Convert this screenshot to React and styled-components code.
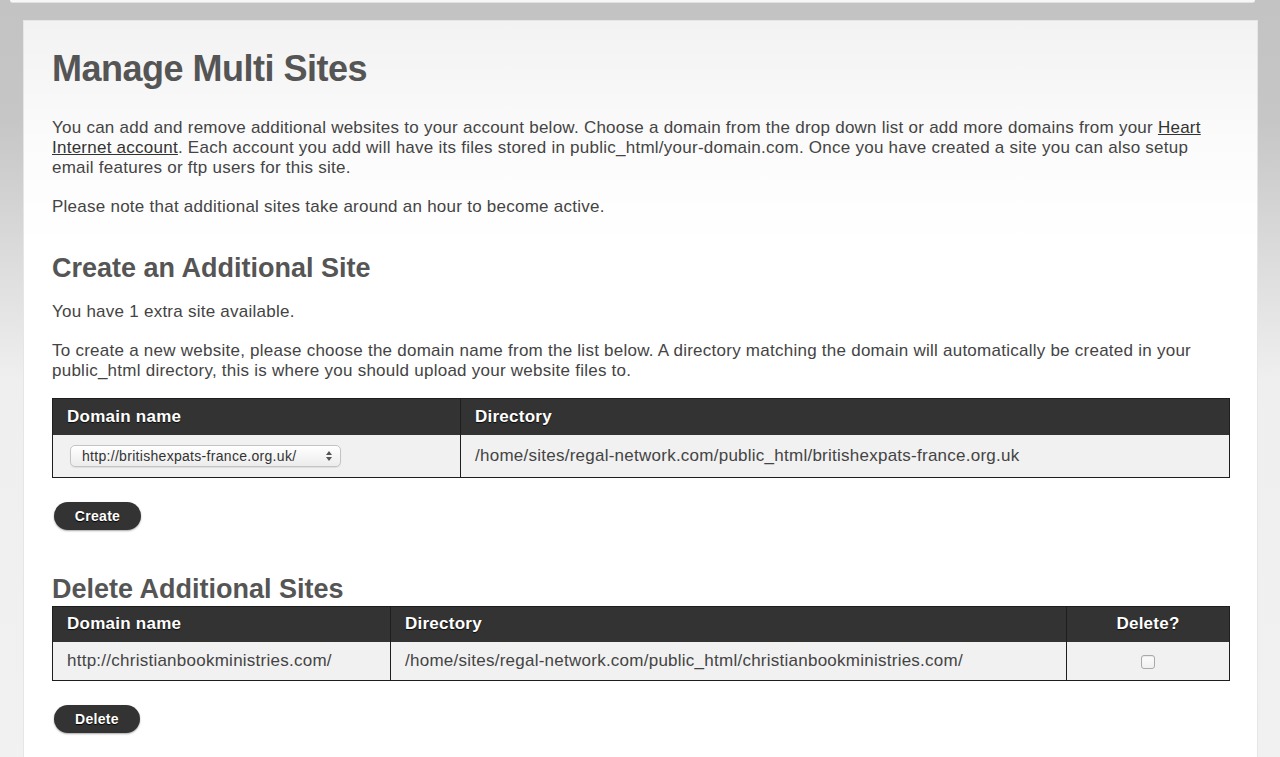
import React from 'react';
import styled, { createGlobalStyle } from 'styled-components';

const GlobalStyle = createGlobalStyle`
  html, body {
    margin: 0;
    padding: 0;
  }
  body {
    font-family: 'Liberation Sans', Arial, sans-serif;
    background: linear-gradient(#c3c3c3 0, #c6c6c6 120px, #efefef 380px, #f1f1f1 100%);
    min-height: 757px;
  }
`;

const Page = styled.div`
  padding: 0 22px 0 23px;
  height: 757px;
  overflow: hidden;
`;

const PrevPanelEdge = styled.div`
  height: 2px;
  margin: 0 3px 17px -13px;
  background: #f7f7f7;
  border-bottom: 1px solid #e2e2e2;
  border-radius: 0 0 4px 4px;
`;

const Panel = styled.div`
  background: linear-gradient(#f2f2f2 0, #fbfbfb 120px, #ffffff 220px);
  border: 1px solid #e6e6e6;
  border-bottom: none;
  padding: 28px 27px 60px 28px;
  color: #444;
`;

const Title = styled.h1`
  margin: 0 0 29px;
  font-size: 36px;
  line-height: 40px;
  font-weight: bold;
  color: #555;
  letter-spacing: -0.5px;
`;

const SubTitle = styled.h2`
  margin: ${(p) => p.$top}px 0 ${(p) => p.$bottom}px;
  font-size: 27px;
  line-height: 30px;
  font-weight: bold;
  color: #555;
`;

const Text = styled.p`
  margin: 0 0 ${(p) => p.$bottom ?? 19}px;
  font-size: 17px;
  letter-spacing: 0.25px;
  line-height: 20px;
  color: #444;
`;

const Link = styled.a`
  color: #333;
  text-decoration: underline;
`;

const Table = styled.table`
  width: 100%;
  border-collapse: collapse;
  border: 1px solid #1e1e1e;
  font-size: 17px;
  letter-spacing: 0.25px;
`;

const HeadCell = styled.th`
  background: #333;
  color: #fff;
  font-weight: bold;
  text-align: ${(p) => (p.$center ? 'center' : 'left')};
  height: 36px;
  padding: 0 14px;
  border-left: 1px solid #1e1e1e;
  text-shadow: 0 1px 1px rgba(0, 0, 0, 0.8);
  width: ${(p) => p.$width || 'auto'};
  box-sizing: border-box;
`;

const Cell = styled.td`
  background: #f1f1f1;
  color: #444;
  height: ${(p) => p.$height}px;
  padding: 0 14px;
  border-left: 1px solid #1e1e1e;
  text-align: ${(p) => (p.$center ? 'center' : 'left')};
  vertical-align: middle;
`;

const SelectWrap = styled.div`
  position: relative;
  display: inline-block;
  vertical-align: middle;
  margin-left: 3px;
`;

const Select = styled.select`
  appearance: none;
  width: 271px;
  height: 22px;
  padding: 0 24px 0 11px;
  border: 1px solid #c4c4c4;
  border-radius: 5px;
  background: linear-gradient(#ffffff, #ececec);
  box-shadow: inset 0 1px 0 #fff, 0 1px 1px rgba(0, 0, 0, 0.08);
  font-family: 'Liberation Sans', Arial, sans-serif;
  font-size: 14px;
  letter-spacing: 0.3px;
  color: #333;
  outline: none;
`;

const SelectArrows = styled.svg`
  position: absolute;
  right: 9px;
  top: 6px;
  pointer-events: none;
`;

const Button = styled.button`
  display: block;
  margin: ${(p) => p.$top}px 0 0 2px;
  width: ${(p) => p.$width}px;
  height: 28px;
  border: none;
  border-radius: 14px;
  background: #333;
  box-shadow: 0 1px 2px rgba(0, 0, 0, 0.35);
  color: #fff;
  font-family: 'Liberation Sans', Arial, sans-serif;
  font-size: 14px;
  letter-spacing: 0.3px;
  font-weight: bold;
  text-shadow: 0 1px 1px #000;
  cursor: pointer;
`;

const Checkbox = styled.input`
  appearance: none;
  width: 14px;
  height: 14px;
  margin: 0;
  vertical-align: middle;
  border: 1px solid #a9a9a9;
  border-radius: 3px;
  background: linear-gradient(#fdfdfd, #f0f0f0);
  box-shadow: inset 0 1px 1px rgba(0, 0, 0, 0.08);
`;

export default function App() {
  return (
    <>
      <GlobalStyle />
      <Page>
        <PrevPanelEdge />
        <Panel>
          <Title>Manage Multi Sites</Title>
          <Text>
            You can add and remove additional websites to your account below. Choose a domain
            from the drop down list or add more domains from your{' '}
            <Link href="#">Heart Internet account</Link>. Each account you add will have its files
            stored in public_html/your-domain.com. Once you have created a site you can also setup
            email features or ftp users for this site.
          </Text>
          <Text>Please note that additional sites take around an hour to become active.</Text>

          <SubTitle $top={36} $bottom={19}>Create an Additional Site</SubTitle>
          <Text>You have 1 extra site available.</Text>
          <Text $bottom={17}>
            To create a new website, please choose the domain name from the list below. A directory
            matching the domain will automatically be created in your public_html directory, this
            is where you should upload your website files to.
          </Text>
          <Table>
            <thead>
              <tr>
                <HeadCell $width="408px">Domain name</HeadCell>
                <HeadCell>Directory</HeadCell>
              </tr>
            </thead>
            <tbody>
              <tr>
                <Cell $height={42}>
                  <SelectWrap>
                    <Select defaultValue="britishexpats">
                      <option value="britishexpats">http://britishexpats-france.org.uk/</option>
                    </Select>
                    <SelectArrows width="6" height="10" viewBox="0 0 6 10">
                      <path d="M3 0 L6 4 L0 4 Z" fill="#555" />
                      <path d="M3 10 L6 6 L0 6 Z" fill="#555" />
                    </SelectArrows>
                  </SelectWrap>
                </Cell>
                <Cell $height={42}>/home/sites/regal-network.com/public_html/britishexpats-france.org.uk</Cell>
              </tr>
            </tbody>
          </Table>
          <Button $top={24} $width={87}>Create</Button>

          <SubTitle $top={44} $bottom={2}>Delete Additional Sites</SubTitle>
          <Table>
            <thead>
              <tr>
                <HeadCell $width="338px">Domain name</HeadCell>
                <HeadCell $width="676px">Directory</HeadCell>
                <HeadCell $center>Delete?</HeadCell>
              </tr>
            </thead>
            <tbody>
              <tr>
                <Cell $height={38}>http://christianbookministries.com/</Cell>
                <Cell $height={38}>/home/sites/regal-network.com/public_html/christianbookministries.com/</Cell>
                <Cell $height={38} $center>
                  <Checkbox type="checkbox" />
                </Cell>
              </tr>
            </tbody>
          </Table>
          <Button $top={24} $width={86}>Delete</Button>
        </Panel>
      </Page>
    </>
  );
}
